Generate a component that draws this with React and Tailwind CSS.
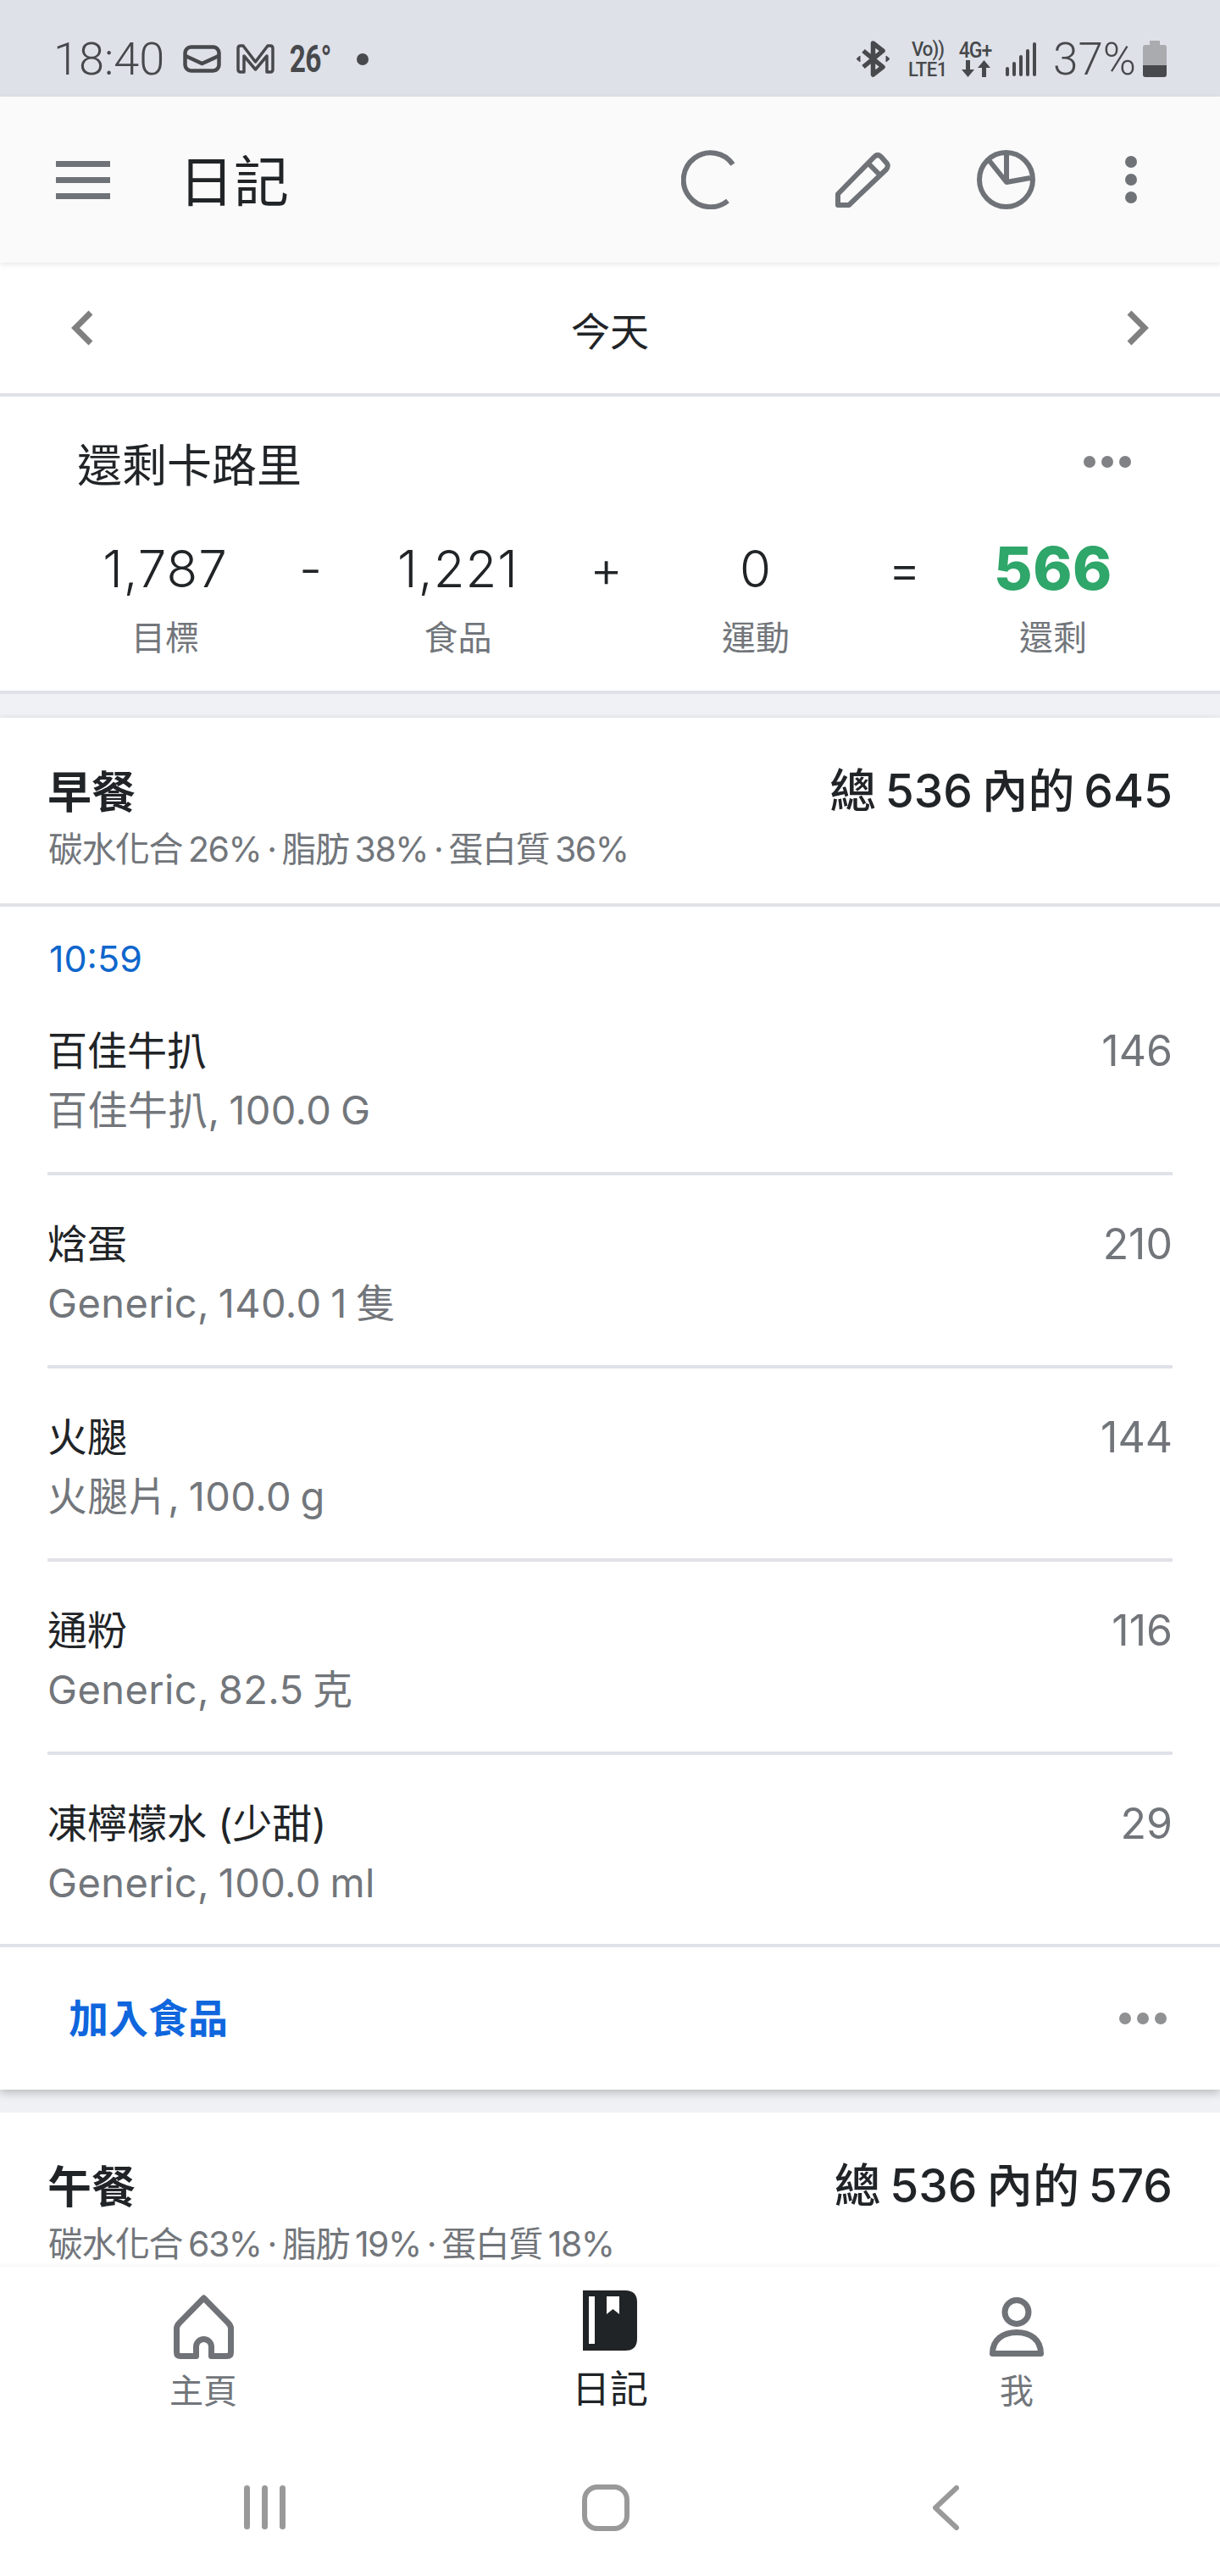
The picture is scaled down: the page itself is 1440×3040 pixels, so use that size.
import React from "react";

const foods = [
  { name: "百佳牛扒", sub: "百佳牛扒, 100.0 G", cal: "146" },
  { name: "焓蛋", sub: "Generic, 140.0 1 隻", cal: "210" },
  { name: "火腿", sub: "火腿片, 100.0 g", cal: "144" },
  { name: "通粉", sub: "Generic, 82.5 克", cal: "116" },
  { name: "凍檸檬水 (少甜)", sub: "Generic, 100.0 ml", cal: "29" },
];

const stats = [
  { v: "1,787", l: "目標" },
  { v: "-" },
  { v: "1,221", l: "食品" },
  { v: "+" },
  { v: "0", l: "運動" },
  { v: "=" },
  { v: "566", l: "還剩", green: true },
];

function Dots({ color }) {
  return (
    <div className="flex gap-[7px]">
      <span className={`w-[14px] h-[14px] rounded-full ${color}`} />
      <span className={`w-[14px] h-[14px] rounded-full ${color}`} />
      <span className={`w-[14px] h-[14px] rounded-full ${color}`} />
    </div>
  );
}

function StatusBar() {
  return (
    <div className="h-[114px] shrink-0 bg-[#dee1e8] flex items-center pt-[25px] pl-[63px] pr-[63px] text-[#47494c] font-['Roboto',sans-serif]">
      <span className="text-[54px] leading-[54px] font-light">18:40</span>
      <svg className="ml-[22px]" width="45" height="33" viewBox="0 0 45 33" fill="none" stroke="#47494c" strokeWidth="4.5" strokeLinejoin="round">
        <rect x="2.5" y="2.5" width="40" height="28" rx="7" />
        <path d="M3 13 L22.5 22 L42 13" />
      </svg>
      <svg className="ml-[18px]" width="45" height="35" viewBox="0 0 45 35" fill="none" stroke="#47494c" strokeWidth="3.5" strokeLinejoin="round">
        <path d="M2 5 Q2 2 5 2 H8 L22.5 21 L37 2 H40 Q43 2 43 5 V30 Q43 33 40 33 H36 V14 L22.5 30 L9 14 V33 H5 Q2 33 2 30 Z" />
      </svg>
      <span className="ml-[10px] text-[44px] leading-[44px] font-bold scale-x-[0.76] tracking-[-1px]">26°</span>
      <span className="ml-[22px] w-[14px] h-[14px] rounded-full bg-[#47494c]" />

      <svg className="ml-auto" width="39" height="43" viewBox="0 0 39 43" fill="none" stroke="#47494c" strokeWidth="5.5" strokeLinejoin="round">
        <path d="M8 12 L31 31 L19.5 40 V3 L31 12 L8 31" />
        <path d="M0 21.5 L4 18 V25 Z M39 21.5 L35 18 V25 Z" fill="#47494c" strokeWidth="1" />
      </svg>
      <div className="ml-[20px] w-[50px] flex flex-col items-center font-medium text-[24px] leading-[24px] scale-x-[0.92] whitespace-nowrap">
        <span className="tracking-[-1px]">Vo))</span>
        <span className="tracking-[-0.5px]">LTE1</span>
      </div>
      <div className="ml-[11px] w-[41px] flex flex-col items-center">
        <span className="font-medium text-[25px] leading-[23px] tracking-[-1px] scale-x-[0.92] whitespace-nowrap">4G+</span>
        <svg width="34" height="20" viewBox="0 0 34 20" fill="#47494c">
          <path d="M5 0 H10 V11 H15 L7.5 20 L0 11 H5 Z" />
          <path d="M24 20 H29 V9 H34 L26.5 0 L19 9 H24 Z" />
        </svg>
      </div>
      <svg className="ml-[15px]" width="36" height="40" viewBox="0 0 36 40" fill="#47494c">
        <rect x="0" y="29" width="4" height="11" rx="2" />
        <rect x="8" y="23" width="4" height="17" rx="2" />
        <rect x="16" y="15" width="4" height="25" rx="2" />
        <rect x="24" y="8" width="4" height="32" rx="2" />
        <rect x="32" y="0" width="4" height="40" rx="2" />
      </svg>
      <span className="ml-[20px] text-[53px] leading-[52px] font-light">37%</span>
      <svg className="ml-[8px]" width="28" height="43" viewBox="0 0 28 43">
        <path d="M8 0 H20 V5 H25 Q28 5 28 8 V29 H0 V8 Q0 5 3 5 H8 Z" fill="#a9abae" />
        <path d="M0 29 H28 V40 Q28 43 25 43 H3 Q0 43 0 40 Z" fill="#47494c" />
      </svg>
    </div>
  );
}

function AppBar() {
  return (
    <div className="h-[196px] shrink-0 bg-[#fafafa] relative z-10 shadow-[0_2px_6px_rgba(0,0,0,0.1)] flex items-center pl-[66px] pr-[98px] text-[#212427]">
      <div className="w-[64px] flex flex-col gap-[12px]">
        <span className="h-[7px] bg-[#6f7378]" />
        <span className="h-[7px] bg-[#6f7378]" />
        <span className="h-[7px] bg-[#6f7378]" />
      </div>
      <span className="ml-[81px] mt-[6px] text-[65px] leading-[76px]">日記</span>
      <svg className="ml-auto" width="70" height="70" viewBox="0 0 70 70" fill="none" stroke="#6f7378" strokeWidth="6">
        <path d="M61 17 A32 32 0 1 0 55 60" />
      </svg>
      <svg className="ml-[112px]" width="65" height="65" viewBox="0 0 65 65" fill="none" stroke="#6f7378" strokeWidth="6" strokeLinejoin="round">
        <path d="M3 49 L46 5 Q50 1 54 5 L61 13 Q63 16 60 20 L16 62 H3 Z" />
        <path d="M39 13 L53 27" />
      </svg>
      <svg className="ml-[102px]" width="69" height="70" viewBox="0 0 69 70" fill="none" stroke="#6f7378" strokeWidth="6" strokeLinejoin="round">
        <ellipse cx="34.5" cy="35" rx="31.5" ry="32" />
        <path d="M15 13 L35 38 L63 33 M35 38 V4" />
      </svg>
      <div className="ml-[106px] flex flex-col gap-[7px]">
        <span className="w-[14px] h-[14px] rounded-full bg-[#6f7378]" />
        <span className="w-[14px] h-[14px] rounded-full bg-[#6f7378]" />
        <span className="w-[14px] h-[14px] rounded-full bg-[#6f7378]" />
      </div>
    </div>
  );
}

function DateRow() {
  return (
    <div className="h-[158px] shrink-0 border-b-4 border-[#e0e2e8] flex items-center justify-between px-[84px] text-[#212427]">
      <svg width="26" height="42" viewBox="0 0 26 42" fill="none" stroke="#808080" strokeWidth="7">
        <path d="M23 3 L5 21 L23 39" />
      </svg>
      <span className="text-[46px] leading-[56px] pt-[8px]">今天</span>
      <svg width="26" height="42" viewBox="0 0 26 42" fill="none" stroke="#808080" strokeWidth="7">
        <path d="M3 3 L21 21 L3 39" />
      </svg>
    </div>
  );
}

function Remaining() {
  return (
    <div className="h-[351px] shrink-0 border-b-4 border-[#e0e2e8] pt-[50px] text-[#212427]">
      <div className="h-[64px] flex items-center justify-between pl-[91px] pr-[105px]">
        <span className="text-[53px] leading-[64px]">還剩卡路里</span>
        <span className="-mt-[10px]">
          <Dots color="bg-[#808285]" />
        </span>
      </div>
      <div className="mt-[49px] pl-[109px] grid grid-cols-[172px_172px_175px_176px_176px_176px_174px]">
        {stats.map((s, i) => (
          <div key={i} className="flex flex-col items-center">
            <span
              className={
                s.green
                  ? "h-[80px] leading-[80px] text-[70px] font-extrabold tracking-[0.5px] text-[#2fa66a]"
                  : "h-[80px] leading-[80px] text-[60px] font-light tracking-[1px]"
              }
            >
              {s.v}
            </span>
            {s.l && <span className="mt-[17px] h-[50px] leading-[50px] text-[40px] text-[#72767b]">{s.l}</span>}
          </div>
        ))}
      </div>
    </div>
  );
}

function MealHeader({ title, total, macro, border }) {
  return (
    <div className={border ? "h-[223px] border-b-4 border-[#e0e2e8] px-[56px] pt-[54px]" : "px-[56px] pt-[54px]"}>
      <div className="h-[70px] flex justify-between items-center">
        <span className="text-[52px] leading-[70px] font-bold text-[#212427]">{title}</span>
        <span className="text-[55px] leading-[70px] font-medium text-[#212427] -mt-[6px] [word-spacing:-4px]">{total}</span>
      </div>
      <div className="text-[41px] leading-[50px] text-[#72767b] mt-[6px] pl-[1px] tracking-[-1.5px] [word-spacing:-3px] whitespace-nowrap">{macro}</div>
    </div>
  );
}

function FoodRow({ f, last }) {
  return (
    <div className={last ? "h-[223px] mx-[56px] pt-[51px] flex justify-between" : "h-[228px] mx-[56px] pt-[51px] border-b-4 border-[#e0e2e8] flex justify-between"}>
      <div>
        <div className="h-[60px] leading-[60px] text-[47px] text-[#212427]">{f.name}</div>
        <div className="mt-[10px] h-[60px] leading-[60px] text-[47px] tracking-[0.4px] [word-spacing:-3px] text-[#72767b]">{f.sub}</div>
      </div>
      <div className="h-[60px] leading-[60px] text-[50px] text-[#72767b]">{f.cal}</div>
    </div>
  );
}

function Tab({ icon, label, pad, active }) {
  return (
    <div className="flex flex-col items-center">
      <div className={`h-[113px] ${pad}`}>{icon}</div>
      <span className={active ? "h-[68px] leading-[64px] text-[45px] text-[#212427]" : "h-[68px] leading-[68px] text-[40px] text-[#72767b]"}>{label}</span>
    </div>
  );
}

function BottomNav() {
  return (
    <div className="h-[365px] shrink-0 bg-white relative z-10 shadow-[0_-2px_5px_rgba(0,0,0,0.04)] flex flex-col">
      <div className="grid grid-cols-3 h-[181px]">
        <Tab
          pad="pt-[33px]"
          label="主頁"
          icon={
            <svg width="71" height="76" viewBox="0 0 71 76" fill="none" stroke="#6f7378" strokeWidth="7" strokeLinejoin="round">
              <path d="M35.5 4 L64 33 Q67.5 36.5 67.5 40 V68 Q67.5 72.5 63 72.5 H44.5 V61.5 A9 9 0 0 0 26.5 61.5 V72.5 H8 Q3.5 72.5 3.5 68 V40 Q3.5 36.5 7 33 Z" />
            </svg>
          }
        />
        <Tab
          active
          pad="pt-[28px]"
          label="日記"
          icon={
            <svg width="64" height="71" viewBox="0 0 64 71">
              <path d="M0 0 H50 Q64 0 64 14 V57 Q64 71 50 71 H0 Z" fill="#212426" />
              <rect x="7" y="7" width="7" height="56" fill="#fff" />
              <path d="M28 7 H43 V28 L35.5 22 L28 28 Z" fill="#fff" />
            </svg>
          }
        />
        <Tab
          pad="pt-[36px]"
          label="我"
          icon={
            <svg width="64" height="70" viewBox="0 0 64 70" fill="none" stroke="#6f7378" strokeWidth="7" strokeLinejoin="round">
              <circle cx="32" cy="17.5" r="14" />
              <path d="M3.5 66.5 C3.5 50 16 41.5 32 41.5 C48 41.5 60.5 50 60.5 66.5 Z" />
            </svg>
          }
        />
      </div>
      <div className="flex-1 flex items-center pl-[288px] pt-[22px]">
        <div className="flex gap-[14px]">
          <span className="w-[7px] h-[52px] rounded-full bg-[#999999]" />
          <span className="w-[7px] h-[52px] rounded-full bg-[#999999]" />
          <span className="w-[7px] h-[52px] rounded-full bg-[#999999]" />
        </div>
        <span className="ml-[350px] w-[56px] h-[55px] rounded-[18px] border-[6px] border-[#999999]" />
        <svg className="ml-[358px]" width="31" height="53" viewBox="0 0 31 53" fill="none" stroke="#999999" strokeWidth="6" strokeLinecap="round" strokeLinejoin="round">
          <path d="M28 3 L3 26.5 L28 50" />
        </svg>
      </div>
    </div>
  );
}

export default function App() {
  return (
    <div className="w-[1440px] h-[3040px] flex flex-col overflow-hidden bg-white font-[Inter,'Noto_Sans_CJK_TC',sans-serif]">
      <StatusBar />
      <AppBar />
      <DateRow />
      <Remaining />
      <div className="flex-1 min-h-0 overflow-hidden bg-[#f0f1f4] pt-[28px]">
        <div className="bg-white relative shadow-[0_4px_10px_rgba(0,0,0,0.22)]">
          <MealHeader border title="早餐" total="總 536 內的 645" macro="碳水化合 26% · 脂肪 38% · 蛋白質 36%" />
          <div className="h-[89px] pt-[36px] pl-[58px] text-[43px] leading-[50px] text-[#0f66cc]">10:59</div>
          {foods.map((f, i) => (
            <FoodRow key={f.name} f={f} last={i === foods.length - 1} />
          ))}
          <div className="border-t-4 border-[#e0e2e8] h-[172px] flex items-center justify-between pl-[81px] pr-[63px]">
            <span className="text-[47px] leading-[60px] font-bold text-[#0f66dd]">加入食品</span>
            <Dots color="bg-[#8f9192]" />
          </div>
        </div>
        <div className="mt-[27px] bg-white h-[200px]">
          <MealHeader title="午餐" total="總 536 內的 576" macro="碳水化合 63% · 脂肪 19% · 蛋白質 18%" />
        </div>
      </div>
      <BottomNav />
    </div>
  );
}
